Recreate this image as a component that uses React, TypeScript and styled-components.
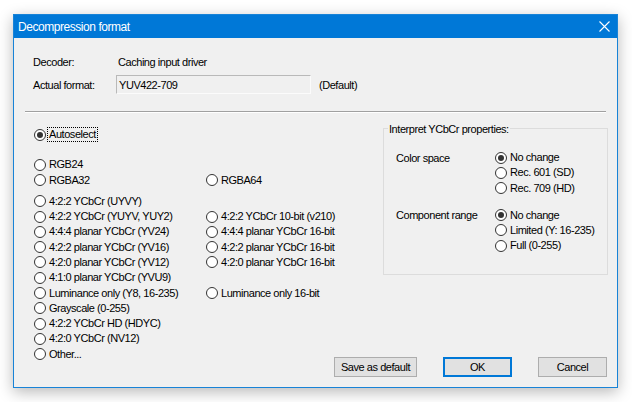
import React from 'react';
import styled, { createGlobalStyle } from 'styled-components';

const GlobalStyle = createGlobalStyle`
  html, body {
    margin: 0;
    padding: 0;
    background: #fff;
  }
  body {
    font-family: "Liberation Sans", Arial, sans-serif;
  }
`;

const Page = styled.div`
  width: 632px;
  height: 402px;
  padding: 14px 0 0 13px;
  box-sizing: border-box;
  overflow: hidden;
`;

const Window = styled.div`
  width: 605px;
  height: 374px;
  box-sizing: border-box;
  border: 1px solid #1883d7;
  background: #f0f0f0;
  display: flex;
  flex-direction: column;
  box-shadow: 0 4px 14px rgba(0, 0, 0, 0.28);
`;

const TitleBar = styled.div`
  flex: none;
  height: 23px;
  background: #0078d7;
  color: #fff;
  display: flex;
  align-items: center;
  justify-content: space-between;
  padding-left: 4px;
  font-size: 12px;
  letter-spacing: -0.45px;
`;

const CloseButton = styled.div`
  width: 26px;
  height: 23px;
  display: flex;
  align-items: center;
  justify-content: center;
`;

const Body = styled.div`
  flex: 1;
  min-height: 0;
  display: flex;
  flex-direction: column;
  font-size: 11px;
  letter-spacing: -0.45px;
  color: #000;
`;

const InfoGrid = styled.div`
  display: grid;
  grid-template-columns: 83px auto auto;
  grid-template-rows: 18px 19px;
  row-gap: 4px;
  align-items: center;
  justify-content: start;
  padding: 15px 0 0 19px;
`;

const Value = styled.div`
  padding-left: 2px;
`;

const ReadOnlyBox = styled.div`
  width: 195px;
  height: 19px;
  box-sizing: border-box;
  border: 1px solid;
  border-color: #b9b9b9 #fbfbfb #fbfbfb #b9b9b9;
  background: #f0f0f0;
  padding-left: 2px;
  display: flex;
  align-items: center;
`;

const Note = styled.div`
  margin-left: 8px;
`;

const Separator = styled.div`
  margin: 17px 11px 0 11px;
  border-top: 1px solid #a0a0a0;
  border-bottom: 1px solid #fff;
`;

const Main = styled.div`
  flex: 1;
  min-height: 0;
  display: flex;
  padding-left: 20px;
`;

const RadioList = styled.div`
  width: 300px;
  flex: none;
  padding-top: 14px;
`;

const RadioRow = styled.div<{ $gap?: number }>`
  display: grid;
  grid-template-columns: 172px auto;
  height: 15.3px;
  margin-top: ${(p) => p.$gap ?? 0}px;
`;

const RadioItem = styled.div`
  display: flex;
  align-items: center;
  white-space: nowrap;
`;

const Circle = styled.span<{ $checked?: boolean }>`
  flex: none;
  width: 12px;
  height: 12px;
  box-sizing: border-box;
  border: 1px solid #333;
  border-radius: 50%;
  background: #fff;
  margin-right: 3px;
  display: flex;
  align-items: center;
  justify-content: center;

  &::after {
    content: '';
    display: ${(p) => (p.$checked ? 'block' : 'none')};
    width: 6px;
    height: 6px;
    border-radius: 50%;
    background: #333;
  }
`;

const Caption = styled.span<{ $focused?: boolean }>`
  line-height: 13px;
  padding: 0 1px;
  margin-left: -1px;
  outline: ${(p) => (p.$focused ? '1px dotted #000' : 'none')};
`;

const RightPanel = styled.div`
  flex: 1;
  display: flex;
  flex-direction: column;
  align-items: flex-end;
`;

const GroupBox = styled.div`
  width: 225px;
  height: 147px;
  box-sizing: border-box;
  margin: 15px 10px 0 0;
  border: 1px solid #dcdcdc;
`;

const Legend = styled.div`
  width: fit-content;
  margin: -6px 0 0 4px;
  padding: 0 1px;
  line-height: 13px;
  background: #f0f0f0;
`;

const PropGrid = styled.div<{ $gap?: number }>`
  display: grid;
  grid-template-columns: 99px auto;
  padding-left: 12px;
  margin-top: ${(p) => p.$gap ?? 0}px;
`;

const PropLabel = styled.div`
  height: 15.3px;
  display: flex;
  align-items: center;
`;

const PropOptions = styled.div`
  display: flex;
  flex-direction: column;
`;

const OptionRow = styled(RadioItem)`
  height: 15.3px;
`;

const ButtonRow = styled.div`
  margin-top: auto;
  margin-right: 11px;
  margin-bottom: 10px;
  display: flex;
  gap: 26px;
`;

const Button = styled.button<{ $width: number; $default?: boolean }>`
  width: ${(p) => p.$width}px;
  height: 20px;
  box-sizing: border-box;
  padding: 0;
  background: #e1e1e1;
  border: 1px solid ${(p) => (p.$default ? '#0078d7' : '#adadad')};
  box-shadow: ${(p) => (p.$default ? 'inset 0 0 0 1px #0078d7' : 'none')};
  font: inherit;
  letter-spacing: inherit;
  color: #000;
`;

type FormatRow = {
  gap?: number;
  left: string;
  right?: string;
  checked?: boolean;
};

const formatRows: FormatRow[] = [
  { left: 'Autoselect', checked: true },
  { gap: 15, left: 'RGB24' },
  { left: 'RGBA32', right: 'RGBA64' },
  { gap: 5.7, left: '4:2:2 YCbCr (UYVY)' },
  { left: '4:2:2 YCbCr (YUYV, YUY2)', right: '4:2:2 YCbCr 10-bit (v210)' },
  { left: '4:4:4 planar YCbCr (YV24)', right: '4:4:4 planar YCbCr 16-bit' },
  { left: '4:2:2 planar YCbCr (YV16)', right: '4:2:2 planar YCbCr 16-bit' },
  { left: '4:2:0 planar YCbCr (YV12)', right: '4:2:0 planar YCbCr 16-bit' },
  { left: '4:1:0 planar YCbCr (YVU9)' },
  { left: 'Luminance only (Y8, 16-235)', right: 'Luminance only 16-bit' },
  { left: 'Grayscale (0-255)' },
  { left: '4:2:2 YCbCr HD (HDYC)' },
  { left: '4:2:0 YCbCr (NV12)' },
  { left: 'Other...' },
];

const properties = [
  { label: 'Color space', options: ['No change', 'Rec. 601 (SD)', 'Rec. 709 (HD)'], gap: 14 },
  { label: 'Component range', options: ['No change', 'Limited (Y: 16-235)', 'Full (0-255)'], gap: 11.5 },
];

function Radio({ label, checked, focused }: { label: string; checked?: boolean; focused?: boolean }) {
  return (
    <RadioItem>
      <Circle $checked={checked} />
      <Caption $focused={focused}>{label}</Caption>
    </RadioItem>
  );
}

function CloseIcon() {
  return (
    <svg width="11" height="11" viewBox="0 0 11 11">
      <path d="M0.5 0.5 L10.5 10.5 M10.5 0.5 L0.5 10.5" stroke="#fff" strokeWidth="1.1" fill="none" />
    </svg>
  );
}

export default function App() {
  return (
    <>
      <GlobalStyle />
      <Page>
        <Window>
          <TitleBar>
            <span>Decompression format</span>
            <CloseButton>
              <CloseIcon />
            </CloseButton>
          </TitleBar>
          <Body>
            <InfoGrid>
              <div>Decoder:</div>
              <Value>Caching input driver</Value>
              <div />
              <div>Actual format:</div>
              <ReadOnlyBox>YUV422-709</ReadOnlyBox>
              <Note>(Default)</Note>
            </InfoGrid>
            <Separator />
            <Main>
              <RadioList>
                {formatRows.map((row, i) => (
                  <RadioRow key={i} $gap={row.gap}>
                    <Radio label={row.left} checked={row.checked} focused={row.checked} />
                    {row.right ? <Radio label={row.right} /> : <div />}
                  </RadioRow>
                ))}
              </RadioList>
              <RightPanel>
                <GroupBox>
                  <Legend>Interpret YCbCr properties:</Legend>
                  {properties.map((prop) => (
                    <PropGrid key={prop.label} $gap={prop.gap}>
                      <PropLabel>{prop.label}</PropLabel>
                      <PropOptions>
                        {prop.options.map((opt, i) => (
                          <OptionRow key={opt}>
                            <Circle $checked={i === 0} />
                            <Caption>{opt}</Caption>
                          </OptionRow>
                        ))}
                      </PropOptions>
                    </PropGrid>
                  ))}
                </GroupBox>
                <ButtonRow>
                  <Button $width={83}>Save as default</Button>
                  <Button $width={69} $default>
                    OK
                  </Button>
                  <Button $width={69}>Cancel</Button>
                </ButtonRow>
              </RightPanel>
            </Main>
          </Body>
        </Window>
      </Page>
    </>
  );
}
